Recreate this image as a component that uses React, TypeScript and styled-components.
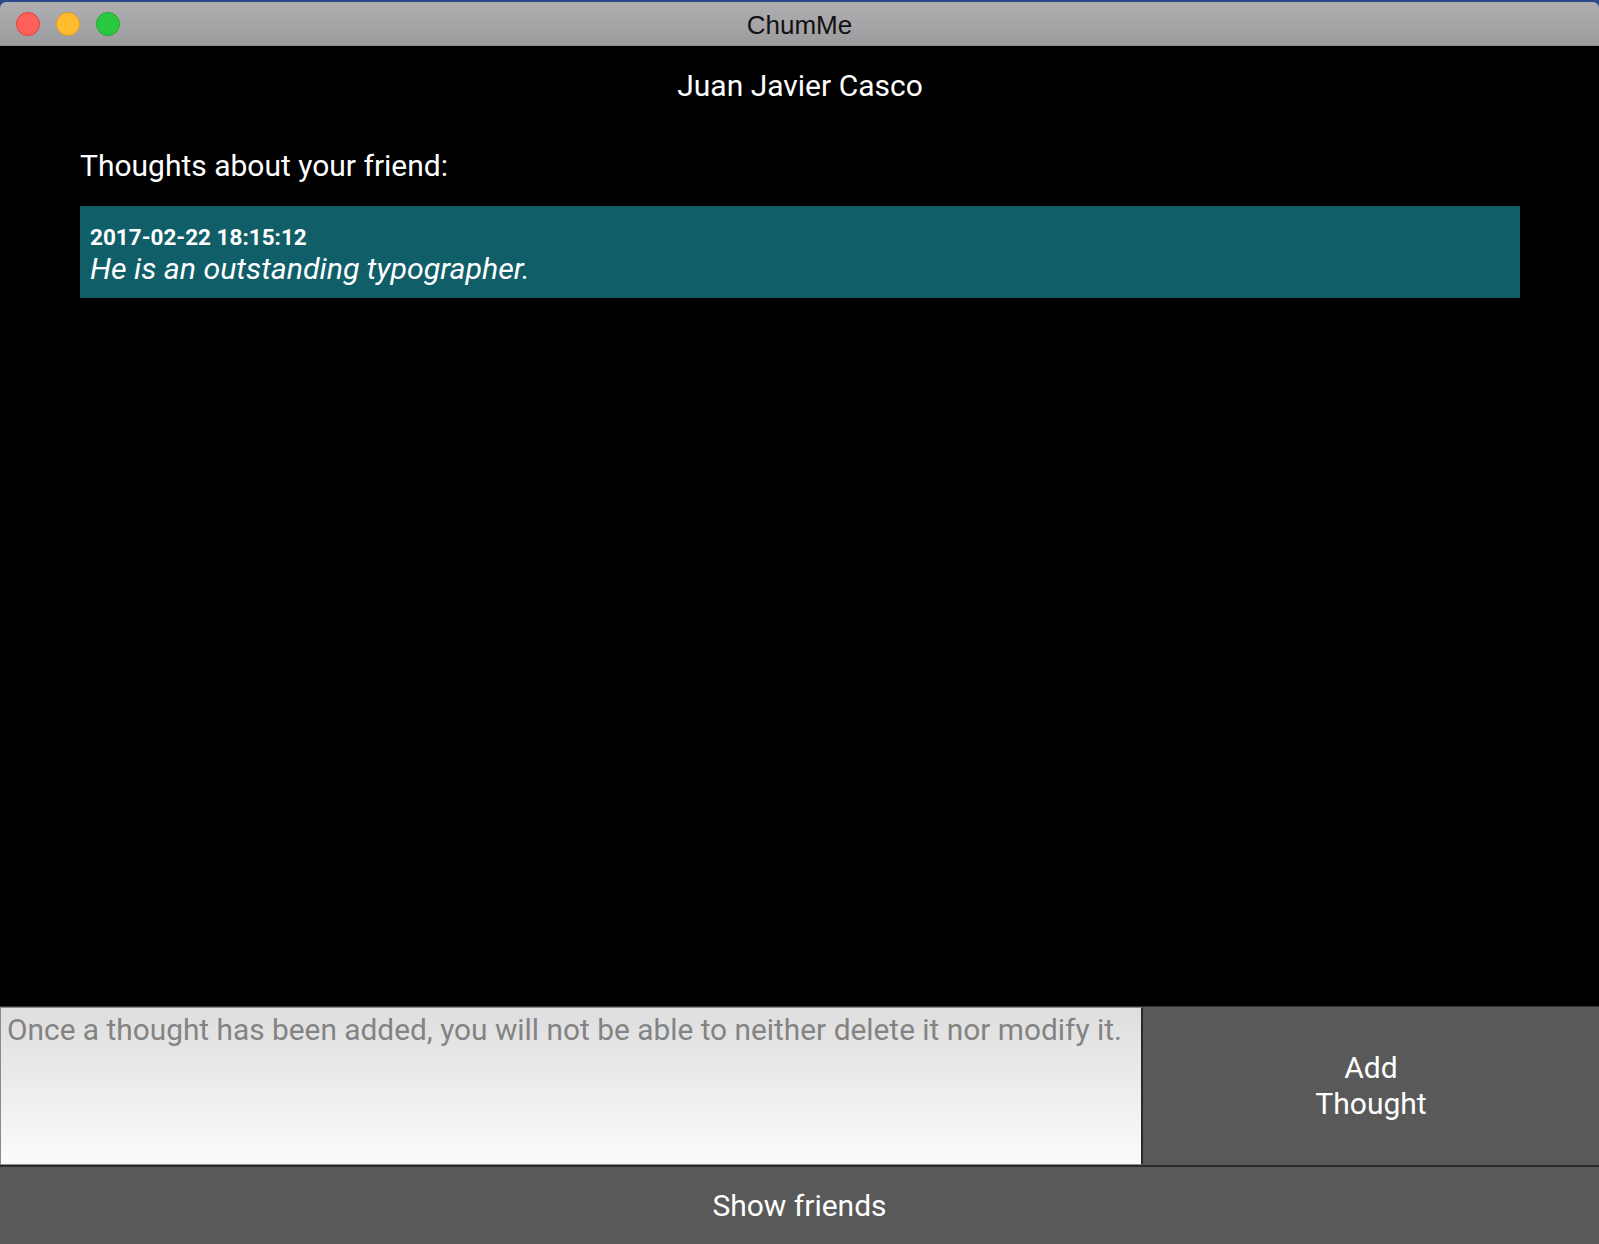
import React from "react";
import styled, { createGlobalStyle } from "styled-components";

const Global = createGlobalStyle`
  html, body { margin: 0; padding: 0; background: #2b4a8a; }
  body { font-family: Roboto, "Noto Sans", sans-serif; }
  * { box-sizing: border-box; }
`;

const Window = styled.div`
  width: 1599px;
  height: 1244px;
  padding-top: 2px;
  display: flex;
  flex-direction: column;
`;

const TitleBar = styled.div`
  height: 44px;
  flex: none;
  border-radius: 6px 6px 0 0;
  background: linear-gradient(#afaeb0, #9c9b9d);
  border-bottom: 1px solid #8b8a8c;
  display: flex;
  align-items: center;
  position: relative;
  padding-left: 16px;
  gap: 16px;
`;

const Light = styled.span<{ $c: string; $b: string }>`
  width: 24px;
  height: 24px;
  border-radius: 50%;
  background: ${(p) => p.$c};
  border: 1px solid ${(p) => p.$b};
`;

const Title = styled.div`
  position: absolute;
  left: 0;
  right: 0;
  top: 8px;
  text-align: center;
  font-family: "Liberation Sans", Arial, sans-serif;
  font-size: 26px;
  line-height: 30px;
  color: #111;
  pointer-events: none;
`;

const Body = styled.div`
  flex: 1;
  background: #000;
  display: flex;
  flex-direction: column;
  min-height: 0;
`;

const Content = styled.div`
  flex: 1;
  padding: 0 79px 0 80px;
  display: flex;
  flex-direction: column;
`;

const FriendName = styled.h1`
  margin: 22px 0 0;
  font-weight: 400;
  font-size: 30px;
  line-height: 36px;
  color: #fff;
  text-align: center;
`;

const Heading = styled.h2`
  margin: 44px 0 0 0;
  font-weight: 400;
  font-size: 30px;
  line-height: 36px;
  color: #fff;
`;

const Card = styled.div`
  margin-top: 22px;
  background: #105e68;
  height: 92px;
  padding: 17px 10px 0;
  color: #fff;
`;

const Stamp = styled.div`
  font-weight: 700;
  font-size: 22.5px;
  line-height: 28px;
`;

const Quote = styled.div`
  font-style: italic;
  font-size: 30.3px;
  line-height: 36px;
`;

const InputRow = styled.div`
  display: flex;
  height: 159px;
  flex: none;
  border-top: 1px solid #333;
`;

const ThoughtInput = styled.textarea`
  width: 1143px;
  flex: none;
  border: 1px solid #8a8a8a;
  border-right: 2px solid #2a2a2a;
  background: linear-gradient(#dedede, #fbfbfb);
  font-family: Roboto, sans-serif;
  font-size: 29.85px;
  line-height: 36px;
  padding: 4px 6px;
  resize: none;
  outline: none;
  margin: 0;
  &::placeholder { color: #838383; }
`;

const GreyButton = styled.button`
  background: #595959;
  color: #fff;
  border: none;
  margin: 0;
  font-family: Roboto, sans-serif;
  font-size: 30px;
  line-height: 36px;
  cursor: pointer;
`;

const AddButton = styled(GreyButton)`
  flex: 1;
  padding: 0;
`;

const FriendsButton = styled(GreyButton)`
  height: 79px;
  width: 100%;
  flex: none;
  border-top: 2px solid #2a2a2a;
  padding: 0;
`;

export default function App() {
  return (
    <>
      <Global />
      <Window>
        <TitleBar>
          <Light $c="#fe5f58" $b="#e0443e" />
          <Light $c="#ffbd2e" $b="#dea123" />
          <Light $c="#28c941" $b="#1dad2b" />
          <Title>ChumMe</Title>
        </TitleBar>
        <Body>
          <Content>
            <FriendName>Juan Javier Casco</FriendName>
            <Heading>Thoughts about your friend:</Heading>
            <Card>
              <Stamp>2017-02-22 18:15:12</Stamp>
              <Quote>He is an outstanding typographer.</Quote>
            </Card>
          </Content>
          <InputRow>
            <ThoughtInput placeholder="Once a thought has been added, you will not be able to neither delete it nor modify it." />
            <AddButton>
              Add
              <br />
              Thought
            </AddButton>
          </InputRow>
          <FriendsButton>Show friends</FriendsButton>
        </Body>
      </Window>
    </>
  );
}
